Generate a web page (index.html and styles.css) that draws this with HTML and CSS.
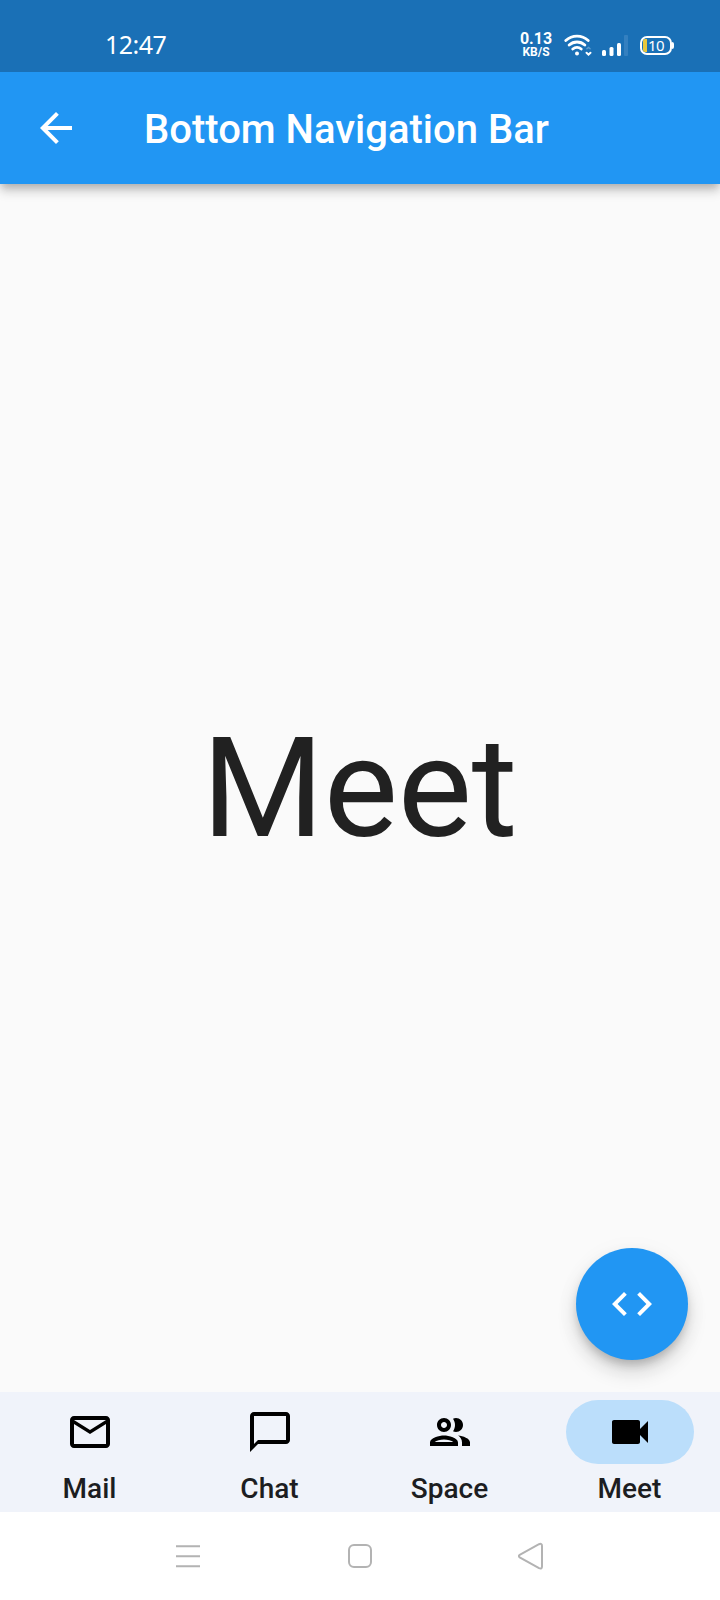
FILE: index.html
```html
<!DOCTYPE html>
<html lang="en">
<head>
<meta charset="utf-8">
<title>Bottom Navigation Bar</title>
<link rel="stylesheet" href="styles.css">
</head>
<body>
<div class="screen">
  <div class="status">
    <span class="clock">12:47</span>
    <div class="indicators">
      <div class="speed"><span class="rate">0.13</span><span class="unit">KB/S</span></div>
      <svg class="wifi" width="28" height="24" viewBox="0 0 28 24" fill="none" stroke="#fff" stroke-width="2.8" stroke-linecap="round">
        <path d="M1.800 7.500a16.500 16.500 0 0 1 22.400 0M5.200 12a11.700 11.700 0 0 1 15.600 0M8.800 16a6.700 6.700 0 0 1 8.400 0"/>
        <circle cx="13" cy="20.500" r="2" fill="#fff" stroke="none"/>
        <path d="M22.500 19.700l2 2 2-2" stroke-width="2"/>
        <path d="M22.900 15.800l1.600-1.400 1.600 1.400" stroke-width="1.400" stroke="#5b9ccf"/>
      </svg>
      <svg class="signal" width="28" height="24" viewBox="0 0 28 24">
        <rect x="0" y="17" width="4" height="6" rx="1.500" fill="#fff"/>
        <rect x="7.500" y="14" width="4" height="9" rx="1.500" fill="#fff"/>
        <rect x="15" y="10" width="4" height="13" rx="1.500" fill="#fff"/>
        <rect x="22" y="2" width="4" height="21" rx="1" fill="#3480c0"/>
      </svg>
      <div class="battery"><span class="charge"></span><span class="level">10</span></div>
    </div>
  </div>
  <header class="appbar">
    <svg class="icon" viewBox="0 0 24 24" fill="#fff"><path d="M20 11H7.830l5.590-5.590L12 4l-8 8 8 8 1.410-1.410L7.830 13H20v-2z"/></svg>
    <h1 class="title">Bottom Navigation Bar</h1>
  </header>
  <main class="page">
    <span class="headline">Meet</span>
    <button class="fab" aria-label="View code">
      <svg class="icon" viewBox="0 0 24 24" fill="#fff"><path d="M9.400 16.600L4.800 12l4.600-4.600L8 6l-6 6 6 6 1.400-1.400zm5.200 0l4.600-4.600-4.600-4.600L16 6l6 6-6 6-1.400-1.400z"/></svg>
    </button>
  </main>
  <nav class="tabs">
    <div class="tab">
      <div class="pill"><svg class="icon" viewBox="0 0 24 24"><path d="M20 4H4c-1.100 0-1.990.9-1.990 2L2 18c0 1.100.9 2 2 2h16c1.100 0 2-.9 2-2V6c0-1.100-.9-2-2-2zm0 14H4V8l8 5 8-5v10zm-8-7L4 6h16l-8 5z"/></svg></div>
      <span>Mail</span>
    </div>
    <div class="tab">
      <div class="pill"><svg class="icon" viewBox="0 0 24 24"><path d="M20 2H4c-1.100 0-2 .9-2 2v18l4-4h14c1.100 0 2-.9 2-2V4c0-1.100-.9-2-2-2zm0 14H6l-2 2V4h16v12z"/></svg></div>
      <span>Chat</span>
    </div>
    <div class="tab">
      <div class="pill"><svg class="icon" viewBox="0 0 24 24"><path d="M9 13.750c-2.340 0-7 1.170-7 3.500V19h14v-1.750c0-2.330-4.660-3.500-7-3.500zM4.340 17c.84-.58 2.870-1.250 4.660-1.250s3.820.67 4.660 1.250H4.340zM9 12c1.930 0 3.500-1.570 3.500-3.500S10.930 5 9 5 5.500 6.570 5.500 8.500 7.070 12 9 12zm0-5c.83 0 1.500.67 1.500 1.500S9.830 10 9 10s-1.500-.67-1.500-1.500S8.170 7 9 7zm7.040 6.810c1.160.84 1.960 1.960 1.960 3.440V19h4v-1.750c0-2.020-3.500-3.170-5.960-3.440zM15 12c1.930 0 3.500-1.570 3.500-3.500S16.930 5 15 5c-.54 0-1.040.13-1.500.35.63.89 1 1.980 1 3.150s-.37 2.260-1 3.150c.46.22.96.35 1.500.35z"/></svg></div>
      <span>Space</span>
    </div>
    <div class="tab">
      <div class="pill selected"><svg class="icon" viewBox="0 0 24 24"><path d="M17 10.500V7c0-.55-.45-1-1-1H4c-.55 0-1 .45-1 1v10c0 .55.45 1 1 1h12c.55 0 1-.45 1-1v-3.500l4 4v-11l-4 4z"/></svg></div>
      <span>Meet</span>
    </div>
  </nav>
  <div class="system">
    <svg width="28" height="28" viewBox="0 0 28 28"><path d="M2 4.300h24M2 14.300h24M2 24.300h24"/></svg>
    <svg width="28" height="28" viewBox="0 0 28 28"><rect x="3" y="3" width="22" height="22" rx="5"/></svg>
    <svg width="28" height="28" viewBox="0 0 28 28"><path d="M1.700 12.800 21 2.200Q24 1 24 4V24.500Q24 27.500 21 26.200L1.700 15.400Q0 14.100 1.700 12.800Z"/></svg>
  </div>
</div>
</body>
</html>
```

FILE: styles.css
```css
* { box-sizing: border-box; }
body { margin: 0; font-family: Roboto, sans-serif; }
.screen {
  width: 720px;
  height: 1600px;
  display: flex;
  flex-direction: column;
  background: #fafafa;
}
.icon { width: 48px; height: 48px; display: block; flex: none; }

.status {
  position: relative;
  z-index: 2;
  height: 72px;
  flex: none;
  padding: 18px 46px 0 105px;
  display: flex;
  justify-content: space-between;
  align-items: center;
  background: #1a70b6;
  color: #fff;
}
.clock { margin-bottom: 2px; font: 25px/28px "Noto Sans", sans-serif; letter-spacing: -0.5px; }
.indicators { display: flex; align-items: center; }
.speed {
  width: 32px;
  display: flex;
  flex-direction: column;
  align-items: center;
  font-weight: 700;
  margin-right: 12px;
}
.rate { font-size: 16px; line-height: 14px; }
.unit { font-size: 12px; line-height: 12px; }
.wifi { margin-right: 10px; }
.signal { margin-right: 10px; }
.battery {
  position: relative;
  width: 32px;
  height: 19px;
  margin-right: 2px;
  border: 2px solid #fff;
  border-radius: 7px;
  display: flex;
  align-items: center;
}
.battery::after {
  content: "";
  position: absolute;
  right: -4px;
  top: 4px;
  width: 2px;
  height: 7px;
  border-radius: 0 2px 2px 0;
  background: #fff;
}
.charge { width: 4px; height: 13px; margin-left: 1px; border-radius: 2px 0 0 2px; background: #e8c73c; }
.level { margin-left: 1px; font: 15px/15px "Noto Sans", sans-serif; letter-spacing: -0.5px; }

.appbar {
  position: relative;
  height: 112px;
  flex: none;
  padding: 0 32px;
  display: flex;
  align-items: center;
  gap: 64px;
  background: #2196f3;
  box-shadow: 0 4px 8px -2px rgba(0,0,0,.2), 0 8px 10px rgba(0,0,0,.14), 0 2px 16px rgba(0,0,0,.04);
  z-index: 1;
}
.title { margin: 0; padding-top: 4px; color: #fff; font-size: 40px; font-weight: 500; line-height: 48px; }

.page { position: relative; flex: 1; display: flex; align-items: center; justify-content: center; }
.headline { margin-right: 1px; font-size: 140px; line-height: 164px; letter-spacing: -0.3px; color: #212121; }
.fab {
  position: absolute;
  right: 32px;
  bottom: 32px;
  width: 112px;
  height: 112px;
  padding: 0;
  border: 0;
  border-radius: 50%;
  display: grid;
  place-items: center;
  background: #2196f3;
  box-shadow: 0 6px 10px -2px rgba(0,0,0,.2), 0 12px 20px rgba(0,0,0,.14), 0 4px 30px rgba(0,0,0,.03);
}

.tabs { position: relative; height: 120px; flex: none; display: flex; background: #f0f3fa; z-index: 1; }
.tab {
  flex: 1;
  padding-top: 8px;
  display: flex;
  flex-direction: column;
  align-items: center;
  gap: 8px;
  color: #1c1d21;
  font-size: 28px;
  font-weight: 500;
  line-height: 33px;
}
.tab span { margin-right: 1px; }
.pill { width: 128px; height: 64px; display: grid; place-items: center; border-radius: 32px; }
.pill.selected { background: #bbdefb; }

.system {
  height: 88px;
  flex: none;
  padding: 0 174px;
  display: flex;
  justify-content: space-between;
  align-items: center;
  background: #fff;
}
.system svg { fill: none; stroke: #b3b3b3; stroke-width: 2; }
```
